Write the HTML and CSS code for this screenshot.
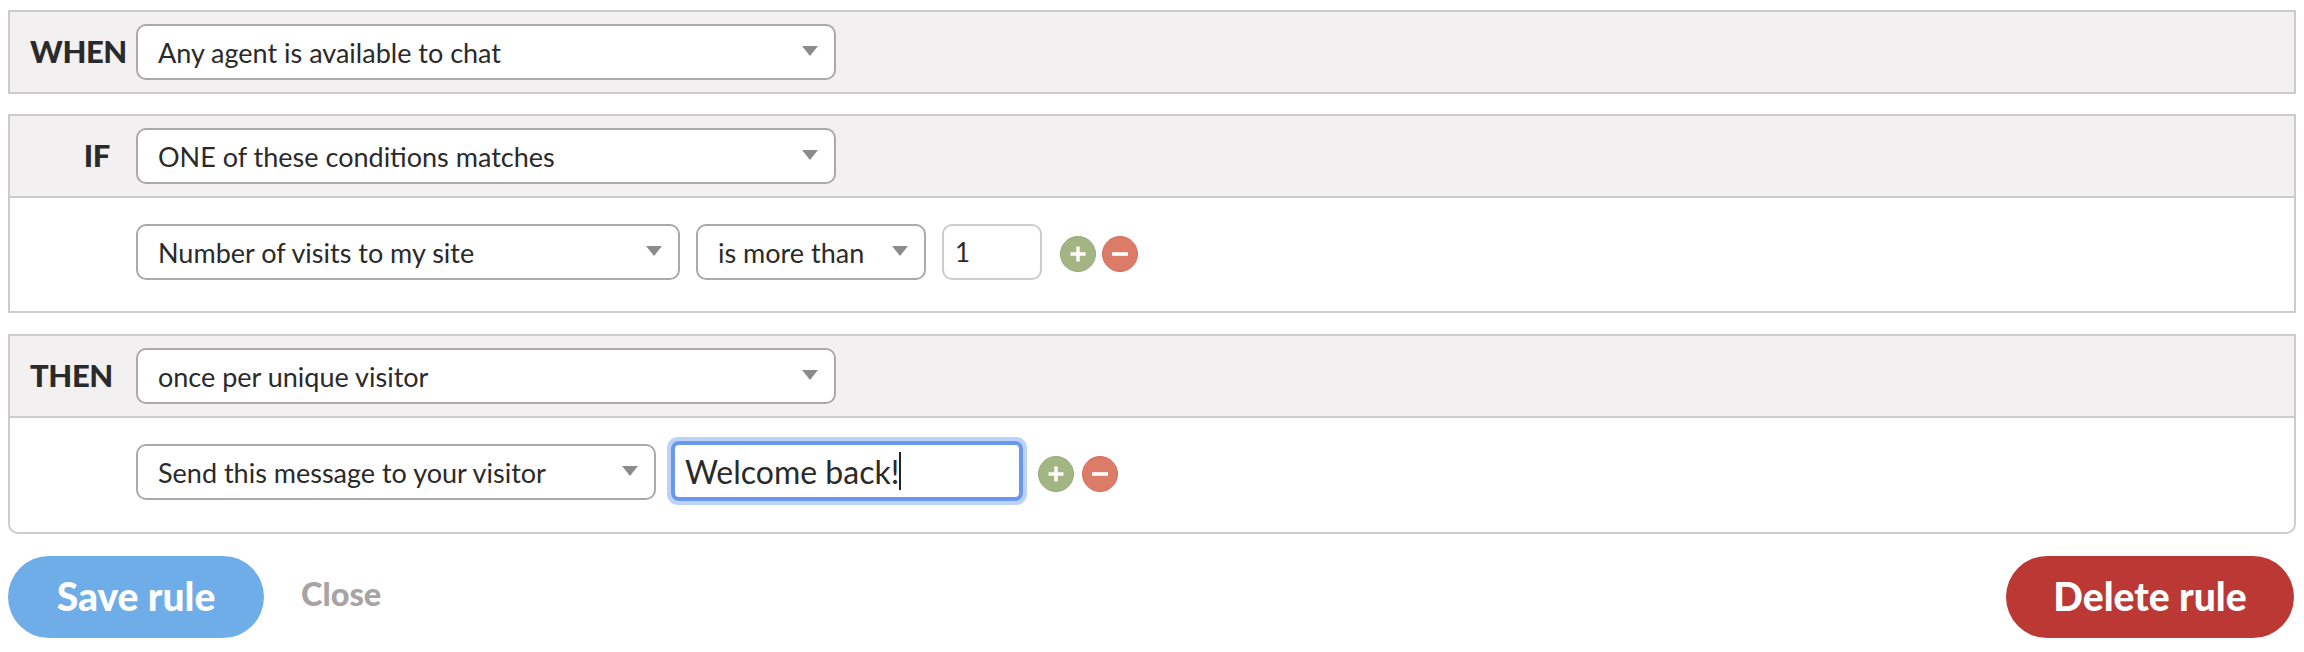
FILE: index.html
```html
<!DOCTYPE html>
<html lang="en">
<head>
<meta charset="utf-8">
<title>Rule</title>
<link rel="stylesheet" href="styles.css">
</head>
<body>
<section class="panel panel-when">
  <div class="head">
    <div class="label">WHEN</div>
    <div class="select wide"><span>Any agent is available to chat</span><i class="arrow"></i></div>
  </div>
</section>
<section class="panel panel-if">
  <div class="head">
    <div class="label label-if">IF</div>
    <div class="select wide"><span>ONE of these conditions matches</span><i class="arrow"></i></div>
  </div>
  <div class="body">
    <div class="select visits"><span>Number of visits to my site</span><i class="arrow"></i></div>
    <div class="select more"><span>is more than</span><i class="arrow"></i></div>
    <div class="number">1</div>
    <div class="icons">
      <svg class="icon" viewBox="0 0 36 36"><circle cx="18" cy="18" r="17.5" fill="#a3b583"/><circle cx="18" cy="18" r="17.5" fill="none" stroke="#94a876" stroke-width="1"/><path d="M18 10.5v15M10.5 18h15" stroke="#fff" stroke-width="3.4"/></svg>
      <svg class="icon" viewBox="0 0 36 36"><circle cx="18" cy="18" r="17.5" fill="#dc7b67"/><circle cx="18" cy="18" r="17.5" fill="none" stroke="#cf6f5c" stroke-width="1"/><path d="M10 18h16" stroke="#fff" stroke-width="3.6"/></svg>
    </div>
  </div>
</section>
<section class="panel panel-then">
  <div class="head">
    <div class="label">THEN</div>
    <div class="select wide"><span>once per unique visitor</span><i class="arrow"></i></div>
  </div>
  <div class="body">
    <div class="select send"><span>Send this message to your visitor</span><i class="arrow"></i></div>
    <div class="message"><span>Welcome back!</span><i class="caret"></i></div>
    <div class="icons icons-then">
      <svg class="icon" viewBox="0 0 36 36"><circle cx="18" cy="18" r="17.5" fill="#a3b583"/><circle cx="18" cy="18" r="17.5" fill="none" stroke="#94a876" stroke-width="1"/><path d="M18 10.5v15M10.5 18h15" stroke="#fff" stroke-width="3.4"/></svg>
      <svg class="icon" viewBox="0 0 36 36"><circle cx="18" cy="18" r="17.5" fill="#dc7b67"/><circle cx="18" cy="18" r="17.5" fill="none" stroke="#cf6f5c" stroke-width="1"/><path d="M10 18h16" stroke="#fff" stroke-width="3.6"/></svg>
    </div>
  </div>
</section>
<footer class="actions">
  <button class="btn save">Save rule</button>
  <span class="close">Close</span>
  <button class="btn delete">Delete rule</button>
</footer>
</body>
</html>
```

FILE: styles.css
```css
* { box-sizing: border-box; }
html, body { margin: 0; background: #fff; }
body {
  width: 2304px;
  height: 652px;
  padding: 10px 8px 0;
  font-family: Lato, "Liberation Sans", sans-serif;
  color: #2b2a2b;
  overflow: hidden;
}
.panel { border: 2px solid #ccc; margin-bottom: 21px; }
.panel-when { margin-bottom: 20px; }
.panel-then { margin-bottom: 22px; border-radius: 0 0 10px 10px; }
.head {
  display: flex;
  align-items: flex-start;
  background: #f2f0f1;
  padding: 12px 0;
  height: 80px;
}
.panel-if .head, .panel-then .head { height: 82px; border-bottom: 2px solid #ccc; }
.label {
  width: 126px;
  padding-left: 20px;
  font-size: 31px;
  font-weight: 900;
  letter-spacing: -0.4px;
  line-height: 54px;
  flex: none;
}
.label-if { text-align: right; padding-right: 26px; padding-left: 0; }
.select {
  display: flex;
  align-items: center;
  justify-content: space-between;
  height: 56px;
  flex: none;
  background: #fff;
  border: 2px solid #aaa;
  border-radius: 10px;
  padding: 0 16px 0 20px;
  font-size: 27px;
  white-space: nowrap;
}
.arrow {
  width: 0;
  height: 0;
  border-left: 8px solid transparent;
  border-right: 8px solid transparent;
  border-top: 10px solid #8b8b8b;
  margin-top: -2px;
}
.wide { width: 700px; }
.body {
  display: flex;
  align-items: flex-start;
  padding: 26px 0 31px 126px;
  background: #fff;
}
.panel-then .body { padding: 26px 0 32px 126px; border-radius: 0 0 10px 10px; }
.visits { width: 544px; }
.more { width: 230px; margin-left: 16px; }
.send { width: 520px; }
.number {
  width: 100px;
  height: 56px;
  margin-left: 16px;
  border: 2px solid #ccc;
  border-radius: 10px;
  padding: 1px 0 0 11px;
  font-size: 26px;
  font-weight: 400;
  line-height: 50px;
}
.icons { display: flex; gap: 6px; margin: 12px 0 0 18px; }
.icons-then { gap: 8px; margin-left: 19px; }
.icon { width: 36px; height: 36px; display: block; }
.message {
  display: flex;
  align-items: center;
  width: 344px;
  height: 52px;
  margin: 1px 0 0 19px;
  padding-left: 10px;
  background: #fff;
  border-radius: 4px;
  box-shadow: 0 0 0 4px #6a98ec, 0 0 0 8px #bcd2f8;
  font-size: 32px;
  white-space: nowrap;
}
.caret {
  width: 2px;
  height: 38px;
  background: #222;
}
.actions { display: flex; align-items: center; }
.btn {
  height: 82px;
  border: 0;
  border-radius: 41px;
  color: #fff;
  font-family: inherit;
  font-size: 39px;
  font-weight: 900;
  padding: 0 0 2px;
}
.save { width: 256px; background: #6fade8; }
.close {
  margin-left: 37px;
  font-size: 32.5px;
  font-weight: 900;
  color: #a8a4a5;
  margin-top: -7px;
}
.delete { width: 288px; background: #bb3834; margin-left: auto; margin-right: 2px; }
```
